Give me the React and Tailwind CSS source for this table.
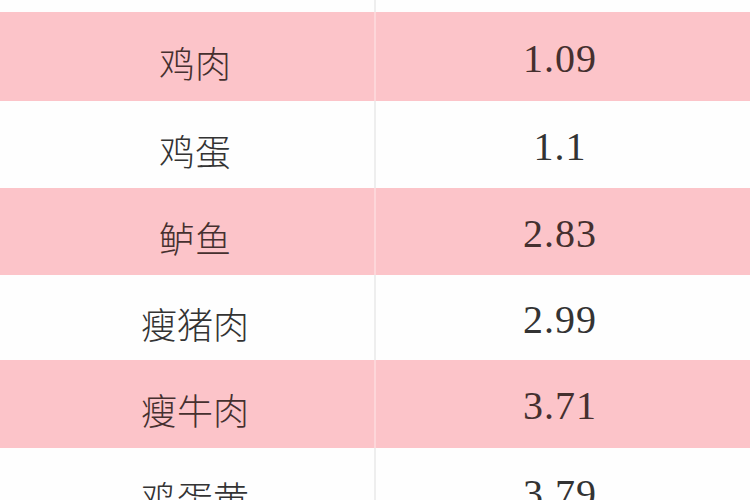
const rows = [
  { name: "", value: "", h: "h-[12px]", pink: false },
  { name: "鸡肉", value: "1.09", h: "h-[89px]", pink: true },
  { name: "鸡蛋", value: "1.1", h: "h-[87px]", pink: false },
  { name: "鲈鱼", value: "2.83", h: "h-[87px]", pink: true },
  { name: "瘦猪肉", value: "2.99", h: "h-[85px]", pink: false },
  { name: "瘦牛肉", value: "3.71", h: "h-[88px]", pink: true },
  { name: "鸡蛋黄", value: "3.79", h: "h-[87px]", pink: false },
];

function App() {
  return (
    <div className="w-[750px] h-[500px] overflow-hidden bg-[#fefefe]">
      {rows.map((r, i) => (
        <div
          key={i}
          className={`grid grid-cols-[376px_1fr] ${r.h} ${
            r.pink ? "bg-[#fcc4c9] text-[#45302f]" : "bg-[#fefefe] text-[#333333]"
          }`}
        >
          <div
            className={`flex items-center justify-center pl-[16px] pt-[10px] border-r-2 ${
              r.pink ? "border-[#fdd6d9]" : "border-[#eeeeee]"
            } text-[36px] font-['Noto_Sans_CJK_SC',sans-serif] font-light`}
          >
            {r.name}
          </div>
          <div className="flex items-center justify-center pr-[6px] pt-[4px] text-[40px] font-['Liberation_Serif',serif] tracking-[1px]">
            {r.value}
          </div>
        </div>
      ))}
    </div>
  );
}

export default App;
